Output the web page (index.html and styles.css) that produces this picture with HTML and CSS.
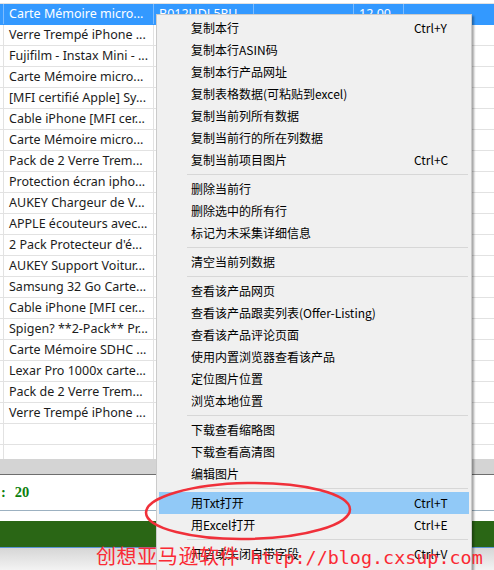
FILE: index.html
```html
<!DOCTYPE html>
<html lang="zh-CN">
<head>
    <meta charset="UTF-8">
    <meta name="viewport" content="width=device-width, initial-scale=1.0">
    <title>产品列表</title>
    <link rel="stylesheet" href="styles.css">
</head>
<body>
    <div class="app">
      <div class="grid">
        <div class="grid-top"></div>
        <div class="row selected">
          <div class="cell c0"></div><div class="cell c1">Carte Mémoire micro...</div><div class="cell c2">B012UDL5RU</div><div class="cell c3"></div><div class="cell c4">12.00</div><div class="cell c5"></div>
        </div>
        <div class="row"><div class="cell c0"></div><div class="cell c1">Verre Trempé iPhone ...</div><div class="cell c2"></div><div class="cell c3"></div><div class="cell c4"></div><div class="cell c5"></div></div>
        <div class="row"><div class="cell c0"></div><div class="cell c1">Fujifilm - Instax Mini - ...</div><div class="cell c2"></div><div class="cell c3"></div><div class="cell c4"></div><div class="cell c5"></div></div>
        <div class="row"><div class="cell c0"></div><div class="cell c1">Carte Mémoire micro...</div><div class="cell c2"></div><div class="cell c3"></div><div class="cell c4"></div><div class="cell c5"></div></div>
        <div class="row"><div class="cell c0"></div><div class="cell c1">[MFI certifié Apple] Sy...</div><div class="cell c2"></div><div class="cell c3"></div><div class="cell c4"></div><div class="cell c5"></div></div>
        <div class="row"><div class="cell c0"></div><div class="cell c1">Cable iPhone [MFI cer...</div><div class="cell c2"></div><div class="cell c3"></div><div class="cell c4"></div><div class="cell c5"></div></div>
        <div class="row"><div class="cell c0"></div><div class="cell c1">Carte Mémoire micro...</div><div class="cell c2"></div><div class="cell c3"></div><div class="cell c4"></div><div class="cell c5"></div></div>
        <div class="row"><div class="cell c0"></div><div class="cell c1">Pack de 2 Verre Trem...</div><div class="cell c2"></div><div class="cell c3"></div><div class="cell c4"></div><div class="cell c5"></div></div>
        <div class="row"><div class="cell c0"></div><div class="cell c1">Protection écran ipho...</div><div class="cell c2"></div><div class="cell c3"></div><div class="cell c4"></div><div class="cell c5"></div></div>
        <div class="row"><div class="cell c0"></div><div class="cell c1">AUKEY Chargeur de V...</div><div class="cell c2"></div><div class="cell c3"></div><div class="cell c4"></div><div class="cell c5"></div></div>
        <div class="row"><div class="cell c0"></div><div class="cell c1">APPLE écouteurs avec...</div><div class="cell c2"></div><div class="cell c3"></div><div class="cell c4"></div><div class="cell c5"></div></div>
        <div class="row"><div class="cell c0"></div><div class="cell c1">2 Pack Protecteur d'é...</div><div class="cell c2"></div><div class="cell c3"></div><div class="cell c4"></div><div class="cell c5"></div></div>
        <div class="row"><div class="cell c0"></div><div class="cell c1">AUKEY Support Voitur...</div><div class="cell c2"></div><div class="cell c3"></div><div class="cell c4"></div><div class="cell c5"></div></div>
        <div class="row"><div class="cell c0"></div><div class="cell c1">Samsung 32 Go Carte...</div><div class="cell c2"></div><div class="cell c3"></div><div class="cell c4"></div><div class="cell c5"></div></div>
        <div class="row"><div class="cell c0"></div><div class="cell c1">Cable iPhone [MFI cer...</div><div class="cell c2"></div><div class="cell c3"></div><div class="cell c4"></div><div class="cell c5"></div></div>
        <div class="row"><div class="cell c0"></div><div class="cell c1">Spigen? **2-Pack** Pr...</div><div class="cell c2"></div><div class="cell c3"></div><div class="cell c4"></div><div class="cell c5"></div></div>
        <div class="row"><div class="cell c0"></div><div class="cell c1">Carte Mémoire SDHC ...</div><div class="cell c2"></div><div class="cell c3"></div><div class="cell c4"></div><div class="cell c5"></div></div>
        <div class="row"><div class="cell c0"></div><div class="cell c1">Lexar Pro 1000x carte...</div><div class="cell c2"></div><div class="cell c3"></div><div class="cell c4"></div><div class="cell c5"></div></div>
        <div class="row"><div class="cell c0"></div><div class="cell c1">Pack de 2 Verre Trem...</div><div class="cell c2"></div><div class="cell c3"></div><div class="cell c4"></div><div class="cell c5"></div></div>
        <div class="row"><div class="cell c0"></div><div class="cell c1">Verre Trempé iPhone ...</div><div class="cell c2"></div><div class="cell c3"></div><div class="cell c4"></div><div class="cell c5"></div></div>
        <div class="row"><div class="cell c0"></div><div class="cell c1"></div><div class="cell c2"></div><div class="cell c3"></div><div class="cell c4"></div><div class="cell c5"></div></div>
        <div class="row"><div class="cell c0"></div><div class="cell c1"></div><div class="cell c2"></div><div class="cell c3"></div><div class="cell c4"></div><div class="cell c5"></div></div>
      </div>
      <div class="hscroll"></div>
      <div class="status"><b class="count"><span class="colon">:</span>20</b></div>
      <div class="gap"></div>
      <div class="progress"></div>
      <div class="shade"></div>
    </div>

    <div class="menu">
      <div class="item"><span>复制本行</span><span class="key">Ctrl+Y</span></div>
      <div class="item"><span>复制本行ASIN码</span></div>
      <div class="item"><span>复制本行产品网址</span></div>
      <div class="item"><span>复制表格数据(可粘贴到excel)</span></div>
      <div class="item"><span>复制当前列所有数据</span></div>
      <div class="item"><span>复制当前行的所在列数据</span></div>
      <div class="item"><span>复制当前项目图片</span><span class="key">Ctrl+C</span></div>
      <div class="sep"></div>
      <div class="item"><span>删除当前行</span></div>
      <div class="item"><span>删除选中的所有行</span></div>
      <div class="item"><span>标记为未采集详细信息</span></div>
      <div class="sep"></div>
      <div class="item"><span>清空当前列数据</span></div>
      <div class="sep"></div>
      <div class="item"><span>查看该产品网页</span></div>
      <div class="item"><span>查看该产品跟卖列表(Offer-Listing)</span></div>
      <div class="item"><span>查看该产品评论页面</span></div>
      <div class="item"><span>使用内置浏览器查看该产品</span></div>
      <div class="item"><span>定位图片位置</span></div>
      <div class="item"><span>浏览本地位置</span></div>
      <div class="sep"></div>
      <div class="item"><span>下载查看缩略图</span></div>
      <div class="item"><span>下载查看高清图</span></div>
      <div class="item"><span>编辑图片</span></div>
      <div class="sep"></div>
      <div class="item active"><span>用Txt打开</span><span class="key">Ctrl+T</span></div>
      <div class="item"><span>用Excel打开</span><span class="key">Ctrl+E</span></div>
      <div class="sep"></div>
      <div class="item"><span>开启或关闭自带字段</span><span class="key">Ctrl+V</span></div>
    </div>

    <svg class="ring" width="230" height="76" viewBox="0 0 230 76">
      <ellipse cx="110" cy="36" rx="102" ry="28" fill="none" stroke="#f0303a" stroke-width="2.5" transform="rotate(-1 110 36)"/>
    </svg>

    <div class="watermark"><span class="brand">创想亚马逊软件</span><span class="url">http://blog.cxsup.com</span></div>
</body>
</html>
```

FILE: styles.css
```css
body{
margin: 0;
width: 494px;
height: 570px;
overflow: hidden;
background: #fff;
font-family: "Noto Sans", "Liberation Sans", sans-serif;
}

.app{
display: flex;
flex-direction: column;
}

.grid{
height: 459px;
overflow: hidden;
background: #fff;
}

.grid-top{
height: 3px;
border-bottom: 1px solid #e2e2e2;
}

.row{
display: flex;
height: 21px;
box-sizing: border-box;
border-bottom: 1px solid #e2e2e2;
font-size: 12.5px;
line-height: 20px;
color: #1c1c1c;
}

.row.selected{
background: #3399ff;
color: #fff;
border-bottom-color: #3399ff;
}

.cell{
box-sizing: border-box;
border-right: 1px solid #e2e2e2;
padding-left: 5px;
white-space: nowrap;
overflow: hidden;
}

.selected .cell{
border-right-color: #7dbcff;
}

.c0{ width: 4px; padding: 0; }
.c1{ width: 150px; }
.c2{ width: 100px; }
.c3{ width: 100px; }
.c4{ width: 50px; }
.c5{ flex: 1; border-right: 0; }

.hscroll{
height: 15px;
background: #d4d4d4;
border-bottom: 1px solid #6e6e6e;
}

.status{
height: 35px;
display: flex;
align-items: center;
border-bottom: 1px solid #9cb1c1;
}

.count{
font-family: "Liberation Serif", serif;
font-size: 14.5px;
color: #0c800c;
padding-left: 1px;
}

.colon{
margin-right: 9px;
}

.gap{
height: 10px;
}

.progress{
height: 26px;
background: #2a6615;
border-bottom: 1px solid #5a94d4;
}

.shade{
height: 22px;
background: linear-gradient(#d6d6d6, #f3f3f3);
}

/* context menu */
.menu{
position: absolute;
left: 156px;
top: 14px;
width: 316px;
box-sizing: border-box;
background: #f0f0f0;
border: 1px solid #cbcbcb;
padding: 2px 2px 10px;
box-shadow: 2px 2px 2px rgba(0,0,0,.35);
font-family: "Noto Sans CJK SC", "Noto Sans", sans-serif;
font-size: 12px;
color: #000;
}

.item{
display: grid;
grid-template-columns: 223px 1fr;
height: 22px;
line-height: 22px;
padding-left: 32px;
white-space: nowrap;
}

.item.active{
background: #91c9f7;
}

.sep{
height: 7px;
margin: 0 1px 0 28px;
display: flex;
align-items: center;
}

.sep::before{
content: "";
flex: 1;
border-top: 1px solid #d7d7d7;
}

.ring{
position: absolute;
left: 138px;
top: 475px;
}

.watermark{
position: absolute;
left: 96px;
top: 542px;
display: flex;
align-items: baseline;
gap: 10px;
color: #fa2a34;
white-space: nowrap;
}

.brand{
font-family: "Noto Sans CJK SC", sans-serif;
font-size: 20px;
letter-spacing: .6px;
line-height: 28px;
}

.url{
font-family: "DejaVu Sans Mono", monospace;
font-size: 18.4px;
}
```
